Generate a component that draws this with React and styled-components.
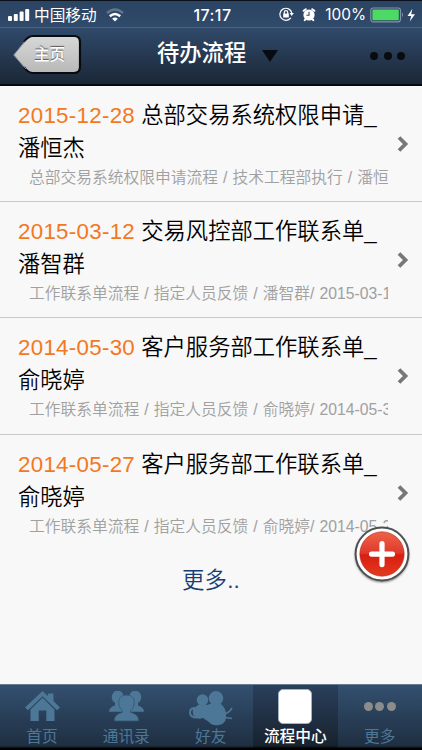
import React from 'react';
import styled, { createGlobalStyle } from 'styled-components';

const Global = createGlobalStyle`
  * { box-sizing: border-box; }
  body { margin: 0; background: #f8f8f8; font-family: "Liberation Sans", "Noto Sans CJK SC", sans-serif; }
`;

const Screen = styled.div`
  width: 422px; height: 750px; display: flex; flex-direction: column;
  background: #f8f8f8; overflow: hidden; position: relative;
`;
const StatusBar = styled.div`
  height: 28px; flex: none; display: flex; align-items: center; padding: 1px 5px 0 8px;
  border-top: 1px solid #0b111b; border-bottom: 1px solid #476484;
  background: linear-gradient(#2b4463, #304a6b); color: #fff; font-size: 16px; line-height: 26px;
`;
const Side = styled.div`
  width: 180px; display: flex; align-items: center; justify-content: ${p => p.$end ? 'flex-end' : 'flex-start'};
`;
const Carrier = styled.span` margin: 1px 9px 0 4px; font-size: 15.7px; line-height: 25px; white-space: nowrap; `;
const Clock = styled.span`
  flex: 1; text-align: center; font-family: Inter, sans-serif; font-weight: 500; font-size: 16px; letter-spacing: 0.4px;
`;
const Percent = styled.span` font-family: Inter, sans-serif; font-size: 15.4px; margin: 0 4px 0 9px; `;

const Header = styled.header`
  height: 58px; flex: none; display: grid; grid-template-columns: 130px 1fr 130px; align-items: start;
  background: linear-gradient(#304a6b, #1b2736); border-bottom: 2px solid #05080c;
`;
const BackButton = styled.button`
  margin: 6px 0 0 12px; padding: 0; width: 72px; height: 43px; border: 0; background: none;
  display: grid; place-items: center;
  > * { grid-area: 1 / 1; }
`;
const BackLabel = styled.span`
  margin: 0 0 5px 3px; font: 500 15.5px/20px "Noto Sans CJK SC", sans-serif; color: #fff; text-shadow: 0 -1px 1px #555;
`;
const Title = styled.h1`
  margin: 5px 0 0; display: flex; align-items: center; gap: 16px; padding-left: 27px;
  font: 500 22.3px/36px "Noto Sans CJK SC", sans-serif; color: #fff; white-space: nowrap;
`;
const Caret = styled.svg` margin-top: 9px; flex: none; `;
const Dots = styled.div`
  display: flex; gap: ${p => p.$gap}px; color: ${p => p.$color};
  i { width: ${p => p.$size}px; height: ${p => p.$size}px; border-radius: 50%; background: currentColor; }
`;
const HeaderMenu = styled.div` display: flex; justify-content: flex-end; padding: 24px 17px 0 0; `;

const List = styled.main` flex: 1; display: flex; flex-direction: column; `;
const Row = styled.article`
  height: ${p => p.$last ? 116 : 116.2}px; flex: none; display: grid; grid-template-columns: 370px 1fr; padding: 13px 0 0 18px;
  border-bottom: 1px solid ${p => p.$last ? 'transparent' : '#c9c9c9'};
`;
const RowTitle = styled.h2`
  margin: 0; width: 366px; font-size: 22.3px; line-height: 33px; font-weight: 350; color: #000;
`;
const DateText = styled.span` color: #f47721; letter-spacing: 0.3px; `;
const Detail = styled.p`
  margin: 2px 0 0 11px; width: 359px; font-size: 15.75px; line-height: 22px; font-weight: 350; color: #a0a0a0;
  word-spacing: 0.7px; white-space: nowrap; overflow: hidden;
`;
const Chevron = styled.svg` margin: 36px 0 0 7.5px; `;
const More = styled.a`
  align-self: center; margin-top: 14px; font-size: 22.4px; line-height: 32px; font-weight: 350; color: #173f75; letter-spacing: 0.15px;
`;
const AddButton = styled.button`
  position: absolute; left: 352px; top: 524px; width: 60px; height: 62px; padding: 0; border: 0; background: none;
`;

const TabBar = styled.nav`
  height: 66px; flex: none; display: grid; grid-template-columns: 84px 84.5px 84.5px 84.5px 84.5px;
  border-top: 1px solid #697d91; border-bottom: 2px solid #000;
  background: linear-gradient(#33506f, #1f2f42 96%, #090f17);
`;
const Tab = styled.div`
  display: flex; flex-direction: column; align-items: center; padding-top: 3px;
  color: ${p => p.$active ? '#fff' : '#4d7796'};
  background: ${p => p.$active ? 'linear-gradient(#293f5b, #18222f 96%, #06090d)' : 'none'};
`;
const TabIcon = styled.div` height: 36px; display: flex; align-items: center; justify-content: center; `;
const TabLabel = styled.span`
  font: ${p => p.$active ? 500 : 400} 15.7px/24px "Noto Sans CJK SC", sans-serif;
`;
const PageTile = styled.div`
  width: 34px; height: 35px; border-radius: 5px; background: #fff; border: 1px solid #a5b0c1;
`;

const Signal = () => (
  <svg width="22" height="14" viewBox="0 0 22 14" fill="#fff">
    <rect x="0" y="8" width="4" height="5" rx="1" /><rect x="5.8" y="6" width="4" height="7" rx="1" />
    <rect x="11.6" y="3.5" width="4" height="9.5" rx="1" /><rect x="17.2" y="1" width="4" height="12" rx="1" />
  </svg>
);
const Wifi = () => (
  <svg width="18" height="14" viewBox="0 0 18 14" fill="none" strokeWidth="2.5">
    <path d="M1 5Q9-2 17 5" stroke="#60758e" /><path d="M3.8 8.2Q9 3.7 14.2 8.2" stroke="#fff" />
    <path d="M6.2 10.8Q9 8.3 11.8 10.8L9 13.4z" fill="#fff" />
  </svg>
);
const RotationLock = () => (
  <svg width="15" height="15" viewBox="0 0 15 15" fill="none" stroke="#fff" strokeWidth="1.2">
    <path d="M11.8 10.8A6 6 0 1 1 12.8 6" /><path d="M10.6 6h4.2l-2.1 3z" fill="#fff" stroke="none" />
    <rect x="4.2" y="6.5" width="5.6" height="4" fill="#fff" stroke="none" /><path d="M5.3 7V5.3a1.7 1.7 0 0 1 3.4 0V7" />
  </svg>
);
const AlarmGlyph = styled.svg` margin-left: 8px; flex: none; `;
const Alarm = () => (
  <AlarmGlyph width="14" height="15" viewBox="0 0 14 15">
    <circle cx="7" cy="8" r="5.6" fill="#fff" />
    <path d="M1.6 3.8 3.8 2.2M10.2 2.2l2.2 1.6M3.4 12.4l-.7.8M10.6 12.4l.7.8" stroke="#fff" strokeWidth="2" strokeLinecap="round" />
    <path d="M7 4.8V8.2H4.4" fill="none" stroke="#2d4767" strokeWidth="1.1" />
  </AlarmGlyph>
);
const Battery = () => (
  <svg width="47" height="16" viewBox="0 0 47 16">
    <rect x=".8" y="1" width="29.7" height="13.8" rx="2.5" fill="none" stroke="#8293a7" strokeWidth="1.2" />
    <rect x="2.4" y="2.6" width="26.4" height="10.6" rx="1" fill="#4cd964" />
    <path d="M32 5.5q2 2.2 0 4.6z" fill="#8293a7" /><path d="M42.4 1.8 37.5 9h3.7l-1.4 5.5L45 7.3h-3.8z" fill="#fff" />
  </svg>
);
const BackShape = () => (
  <svg width="72" height="43" viewBox="0 0 72 43">
    <defs><linearGradient id="silver" x2="0" y2="1"><stop stopColor="#d8d8d8" /><stop offset="1" stopColor="#b8b8b8" /></linearGradient></defs>
    <path d="M12 8Q16 2 21 2H62Q68 2 68 8V33Q68 39 62 39H21Q16 39 12 33L2 21z" fill="url(#silver)" />
    <path d="M12 8Q16 2 21 2H62Q68 2 68 8V33Q68 39 62 39H21Q16 39 12 33" fill="none" stroke="#080b10" strokeWidth="2.2" />
    <path d="M14 6.5 1.7 21 14 35" fill="none" stroke="#89919a" strokeWidth="1" />
  </svg>
);
const HomeIcon = () => (
  <svg width="35" height="31" viewBox="0 0 35 31" fill="currentColor">
    <path d="M17.5 0 23 5V2.5h5.5V10l6.5 6.5-3 2.8L17.5 5.3 3 19.3 0 16.5z" /><path d="m17.5 6.7 12 11.8V30h-8.2V19.5h-7.6V30H5.5V18.5z" />
  </svg>
);
const ContactsIcon = () => (
  <svg width="35" height="31" viewBox="0 0 35 31" fill="currentColor">
    <ellipse cx="8.8" cy="6.2" rx="6" ry="6.6" /><path d="M0 20.8q0-4.7 6-6.4V10h7v10.8z" />
    <ellipse cx="26.2" cy="6.2" rx="6" ry="6.6" /><path d="M35 20.8q0-4.7-6-6.4V10h-7v10.8z" />
    <path d="M17.5 4c6 0 8.2 4 7.6 8.8-.4 4-2 5.5-3.4 6.8v1.8c5 1.2 8 3.6 8 8.6H5.3c0-5 3-7.4 8-8.6v-1.8c-1.4-1.3-3-2.8-3.4-6.8C9.3 8 11.5 4 17.5 4z" stroke="#36536f" strokeWidth=".8" />
  </svg>
);
const FriendsIcon = () => (
  <svg width="46" height="40" viewBox="0 0 46 40" fill="currentColor">
    <circle cx="14.5" cy="14" r="5.8" /><circle cx="28" cy="12.3" r="7.2" />
    <path d="M10 19q4-2 9 0l6-2 8 1q6 5 5 14-1 6-7 7-7 1-10-3l-6-4q-5 2-8-1-3-2-2-8z" />
    <path d="M8 22q-6-.5-6 4.5t7 5" fill="none" stroke="currentColor" strokeWidth="2" />
    <path d="M36 28q5-1 8-6M37 31.5l7 1" fill="none" stroke="currentColor" strokeWidth="1.6" />
  </svg>
);
const AddIcon = () => (
  <svg width="60" height="62" viewBox="0 0 60 62">
    <defs>
      <linearGradient id="red" x2="0" y2="1"><stop stopColor="#ed6447" /><stop offset=".48" stopColor="#df392b" /><stop offset=".52" stopColor="#d91e10" /><stop offset="1" stopColor="#e23a20" /></linearGradient>
      <filter id="shade" x="-20%" y="-20%" width="140%" height="140%"><feGaussianBlur stdDeviation="1.3" /></filter>
    </defs>
    <circle cx="30" cy="31.2" r="27" fill="#777" filter="url(#shade)" />
    <circle cx="30" cy="30" r="26.4" fill="#fff" stroke="#505050" strokeWidth="2" />
    <circle cx="30" cy="30" r="22.2" fill="url(#red)" stroke="#b92e24" strokeWidth=".6" />
    <path d="M30 19.6v21M19.5 30.1h21" stroke="#fff" strokeWidth="5.2" strokeLinecap="round" />
  </svg>
);

const items = [
  ['2015-12-28', '总部交易系统权限申请_', '潘恒杰', '总部交易系统权限申请流程 / 技术工程部执行 / 潘恒'],
  ['2015-03-12', '交易风控部工作联系单_', '潘智群', '工作联系单流程 / 指定人员反馈 / 潘智群/ 2015-03-12'],
  ['2014-05-30', '客户服务部工作联系单_', '俞晓婷', '工作联系单流程 / 指定人员反馈 / 俞晓婷/ 2014-05-30'],
  ['2014-05-27', '客户服务部工作联系单_', '俞晓婷', '工作联系单流程 / 指定人员反馈 / 俞晓婷/ 2014-05-27'],
];
const tabs = [
  ['首页', <HomeIcon />], ['通讯录', <ContactsIcon />], ['好友', <FriendsIcon />], ['流程中心', <PageTile />],
  ['更多', <Dots $size={9} $gap={2.5} $color="#8c8c8c"><i /><i /><i /></Dots>],
];

export default function App() {
  return (
    <>
      <Global />
      <Screen>
        <StatusBar>
          <Side><Signal /><Carrier>中国移动</Carrier><Wifi /></Side>
          <Clock>17:17</Clock>
          <Side $end><RotationLock /><Alarm /><Percent>100%</Percent><Battery /></Side>
        </StatusBar>
        <Header>
          <BackButton><BackShape /><BackLabel>主页</BackLabel></BackButton>
          <Title>待办流程<Caret width="16" height="12" viewBox="0 0 16 12"><path d="M0 0h16L8 12z" fill="#080b0f" /></Caret></Title>
          <HeaderMenu><Dots $size={8} $gap={5.5} $color="#080b0f"><i /><i /><i /></Dots></HeaderMenu>
        </Header>
        <List>
          {items.map(([date, title, person, detail], i) => (
            <Row key={date} $last={i === 3}>
              <div>
                <RowTitle><DateText>{date}</DateText> {title}<br />{person}</RowTitle>
                <Detail>{detail}</Detail>
              </div>
              <Chevron width="14" height="18" viewBox="0 0 14 18"><path d="m3 2.5 6.5 6.5L3 15.5" fill="none" stroke="#777" strokeWidth="3.8" /></Chevron>
            </Row>
          ))}
          <More>更多..</More>
        </List>
        <TabBar>
          {tabs.map(([label, icon], i) => (
            <Tab key={label} $active={i === 3}><TabIcon>{icon}</TabIcon><TabLabel $active={i === 3}>{label}</TabLabel></Tab>
          ))}
        </TabBar>
        <AddButton aria-label="添加"><AddIcon /></AddButton>
      </Screen>
    </>
  );
}
